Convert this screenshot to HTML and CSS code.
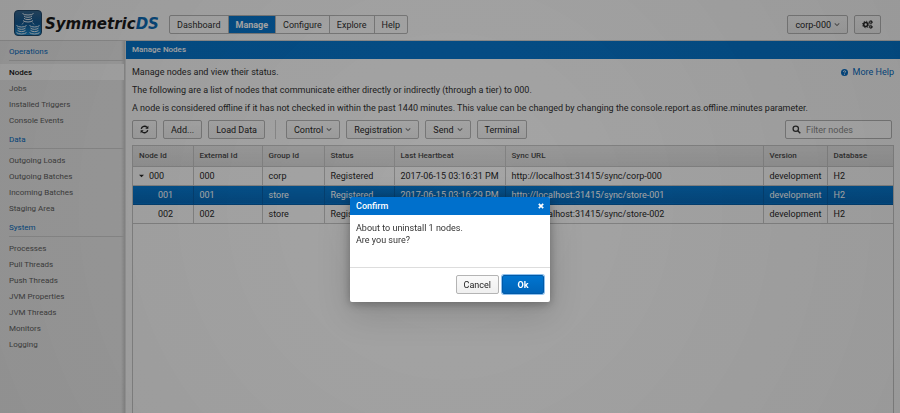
FILE: index.html
```html
<!DOCTYPE html>
<html lang="en">
<head>
<meta charset="utf-8">
<title>SymmetricDS - Manage Nodes</title>
<link rel="stylesheet" href="styles.css">
</head>
<body>
<div class="app">
  <header class="topbar">
    <div class="brand">
      <svg class="brand-mark" viewBox="0 0 28 26" aria-hidden="true">
        <defs><linearGradient id="mark" x1="0" y1="0" x2="0" y2="1"><stop offset="0" stop-color="#35668f"/><stop offset=".5" stop-color="#0d5590"/><stop offset="1" stop-color="#1689cf"/></linearGradient></defs>
        <rect x=".5" y=".5" width="27" height="25" rx="3.5" fill="url(#mark)" stroke="#1d4468"/>
        <path d="M9.500 12.500L8 14.500M18.500 12.500l1.500 2" stroke="#a9c8df" stroke-width="1"/>
        <g fill="none" stroke="#e6f0f8" stroke-width="1">
          <path d="M8.500 3.500Q10 5 14 5T19.500 3.500M10 6Q11 7.300 14 7.300T18 6M10 8.300Q11 9.600 14 9.600T18 8.300M9 10.600Q10.500 12 14 12T19 10.600"/>
          <path d="M2.500 15.500Q4 17 7.500 17T12.500 15.500M3.500 18Q4.500 19.300 7.500 19.300T11.500 18M3.500 20.300Q4.500 21.600 7.500 21.600T11.500 20.300M2.500 22.600Q4 24 7.500 24T12.500 22.600"/>
          <path d="M15.500 15.500Q17 17 20.500 17T25.500 15.500M16.500 18Q17.500 19.300 20.500 19.300T24.500 18M16.500 20.300Q17.500 21.600 20.500 21.600T24.500 20.300M15.500 22.600Q17 24 20.500 24T25.500 22.600"/>
        </g>
      </svg>
      <span class="brand-name">Symmetric<span class="brand-ds">DS</span></span>
    </div>
    <nav class="tabs" aria-label="Main">
      <button class="tab">Dashboard</button><button class="tab tab-on">Manage</button><button class="tab">Configure</button><button class="tab">Explore</button><button class="tab">Help</button>
    </nav>
    <div class="account">
      <button class="btn">corp-000<svg class="chev" viewBox="0 0 8 6"><path d="M1 1.500l3 3 3-3"/></svg></button>
      <button class="btn btn-gear" aria-label="Settings"><svg class="gears" viewBox="0 0 12 10"><g fill="none" stroke="#222"><circle cx="4" cy="5" r="2.200" stroke-width="1.800"/><circle cx="4" cy="5" r="3.600" stroke-width="1" stroke-dasharray="1.400 1.427"/><circle cx="9.600" cy="2.400" r="1.200" stroke-width="1.200"/><circle cx="9.600" cy="2.400" r="2" stroke-width=".7" stroke-dasharray="1 1.100"/><circle cx="9.600" cy="7.600" r="1.200" stroke-width="1.200"/><circle cx="9.600" cy="7.600" r="2" stroke-width=".7" stroke-dasharray="1 1.100"/></g></svg></button>
    </div>
  </header>
  <div class="body">
    <nav class="sidebar" aria-label="Sections">
      <h2 class="group">Operations</h2>
      <ul class="links">
        <li><a class="link link-on" href="#">Nodes</a></li>
        <li><a class="link" href="#">Jobs</a></li>
        <li><a class="link" href="#">Installed Triggers</a></li>
        <li><a class="link" href="#">Console Events</a></li>
      </ul>
      <h2 class="group">Data</h2>
      <ul class="links">
        <li><a class="link" href="#">Outgoing Loads</a></li>
        <li><a class="link" href="#">Outgoing Batches</a></li>
        <li><a class="link" href="#">Incoming Batches</a></li>
        <li><a class="link" href="#">Staging Area</a></li>
      </ul>
      <h2 class="group">System</h2>
      <ul class="links">
        <li><a class="link" href="#">Processes</a></li>
        <li><a class="link" href="#">Pull Threads</a></li>
        <li><a class="link" href="#">Push Threads</a></li>
        <li><a class="link" href="#">JVM Properties</a></li>
        <li><a class="link" href="#">JVM Threads</a></li>
        <li><a class="link" href="#">Monitors</a></li>
        <li><a class="link" href="#">Logging</a></li>
      </ul>
    </nav>
    <main class="main">
      <h1 class="title">Manage Nodes</h1>
      <div class="content">
        <div class="intro">
          <p>Manage nodes and view their status.</p>
          <a class="help" href="#"><svg class="help-icon" viewBox="0 0 8 8"><circle cx="4" cy="4" r="4" fill="#0068c0"/><path d="M2.700 3.200Q2.800 2 4 2T5.300 3.100Q5.300 3.700 4.600 4T4 4.900M4 5.600v1" fill="none" stroke="#fff" stroke-width="1"/></svg>More Help</a>
        </div>
        <p>The following are a list of nodes that communicate either directly or indirectly (through a tier) to 000.</p>
        <p>A node is considered offline if it has not checked in within the past 1440 minutes. This value can be changed by changing the console.report.as.offline.minutes parameter.</p>
        <div class="toolbar">
          <button class="btn btn-icon" aria-label="Refresh"><svg class="refresh" viewBox="0 0 10 10"><path d="M1.400 4.400A3.700 3.700 0 0 1 7.800 2.600M8.600 5.600A3.700 3.700 0 0 1 2.200 7.400" fill="none" stroke="#222" stroke-width="1.500"/><path d="M9.300.8v3.400H5.900zM.7 9.200V5.800h3.400z" fill="#222"/></svg></button>
          <button class="btn">Add...</button>
          <button class="btn">Load Data</button>
          <span class="rule"></span>
          <button class="btn">Control<svg class="chev" viewBox="0 0 8 6"><path d="M1 1.500l3 3 3-3"/></svg></button>
          <button class="btn">Registration<svg class="chev" viewBox="0 0 8 6"><path d="M1 1.500l3 3 3-3"/></svg></button>
          <button class="btn">Send<svg class="chev" viewBox="0 0 8 6"><path d="M1 1.500l3 3 3-3"/></svg></button>
          <button class="btn">Terminal</button>
          <label class="filter"><svg class="search" viewBox="0 0 10 10"><circle cx="4.200" cy="4.200" r="3" fill="none" stroke="#333" stroke-width="1.400"/><path d="M6.400 6.400l2.800 2.800" stroke="#333" stroke-width="1.600"/></svg><input type="text" placeholder="Filter nodes" aria-label="Filter nodes"></label>
        </div>
        <div class="grid">
          <table>
            <colgroup><col class="c-node"><col class="c-ext"><col class="c-group"><col class="c-status"><col class="c-beat"><col><col class="c-version"><col class="c-db"></colgroup>
            <thead><tr><th>Node Id</th><th>External Id</th><th>Group Id</th><th>Status</th><th>Last Heartbeat</th><th>Sync URL</th><th>Version</th><th>Database</th></tr></thead>
            <tbody>
              <tr><td class="root"><svg class="caret" viewBox="0 0 6 4"><path d="M0 .5h6L3 3.500z"/></svg>000</td><td>000</td><td>corp</td><td>Registered</td><td>2017-06-15 03:16:31 PM</td><td>http://localhost:31415/sync/corp-000</td><td>development</td><td>H2</td></tr>
              <tr class="picked"><td class="child">001</td><td>001</td><td>store</td><td>Registered</td><td>2017-06-15 03:16:29 PM</td><td>http://localhost:31415/sync/store-001</td><td>development</td><td>H2</td></tr>
              <tr><td class="child">002</td><td>002</td><td>store</td><td>Registered</td><td>2017-06-15 03:16:29 PM</td><td>http://localhost:31415/sync/store-002</td><td>development</td><td>H2</td></tr>
            </tbody>
          </table>
        </div>
      </div>
    </main>
  </div>
</div>
<div class="curtain">
  <section class="dialog" role="dialog" aria-modal="true" aria-labelledby="dlg-title">
    <header class="dialog-head"><h2 id="dlg-title">Confirm</h2><button class="close" aria-label="Close"><svg viewBox="0 0 6 6"><path d="M.8.8l4.400 4.400M5.200.8L.8 5.200"/></svg></button></header>
    <p class="dialog-text">About to uninstall 1 nodes.<br>Are you sure?</p>
    <footer class="dialog-foot"><button class="btn">Cancel</button><button class="btn btn-ok">Ok</button></footer>
  </section>
</div>
</body>
</html>
```
FILE: styles.css
```css
* { box-sizing: border-box; }
body { margin: 0; font: 9px/12px Roboto, "Liberation Sans", sans-serif; color: #2a2a2a; background: #fafafa; }
h1, h2, p, ul { margin: 0; padding: 0; }
ul { list-style: none; }
a { text-decoration: none; color: inherit; }
button, input { font: inherit; color: inherit; }
svg { display: block; flex: none; }

.app { min-height: 100vh; display: flex; flex-direction: column; }
.topbar { height: 41px; flex: none; display: flex; align-items: flex-start; padding: 7px 19px 0 14px; border-bottom: 1px solid #d0d0d0; }
.brand { display: flex; align-items: center; width: 155px; margin-top: 3px; gap: 3px; }
.brand-mark { width: 28px; height: 26px; }
.brand-name { padding-top: 2px; font: italic bold 15px/18px "DejaVu Sans", sans-serif; color: #151515; }
.brand-ds { color: #0768b4; }
.tabs { display: flex; margin-top: 8px; border: 1px solid #b4b4b4; border-radius: 2px; background: #fafafa; }
.tab { height: 17px; padding: 0 7px; border: 0; border-right: 1px solid #b4b4b4; background: none; }
.tab:last-child { border-right: 0; }
.tab-on { background: #0072ca; color: #fff; font-weight: 700; }
.account { margin: 8px 0 0 auto; display: flex; gap: 6px; }

.btn { height: 19px; padding: 0 7px; border: 1px solid #b4b4b4; border-radius: 2px; background: linear-gradient(#fafafa, #efefef); color: #222; display: flex; align-items: center; justify-content: center; gap: 3px; white-space: nowrap; }
.chev { width: 6px; height: 5px; fill: none; stroke: #777; stroke-width: 1.400; }
.btn-gear { width: 27px; padding: 0; }
.gears { width: 11px; height: 9px; }
.btn-icon { width: 25px; padding: 0; }
.refresh { width: 9px; height: 9px; }

.body { flex: 1; display: flex; }
.sidebar { width: 126px; flex: none; padding-top: 2px; background: linear-gradient(90deg, #ebebeb 0, #ebebeb 121px, #c8c8c8 125px, #fafafa 126px); font-size: 8px; color: #5c5c5c; }
.group { margin: 0 2px 0 9px; height: 18px; line-height: 17px; font-size: 8px; font-weight: 400; color: #0068c0; border-bottom: 1px solid #cfcfcf; }
.links { padding: 3px 2px 3px 0; }
.link { display: block; padding-left: 9px; height: 16px; line-height: 18px; }
.link-on { background: #fafafa; color: #111; font-weight: 500; }

.main { flex: 1; min-width: 0; display: flex; flex-direction: column; }
.title { height: 18px; padding-left: 6px; font-size: 8px; line-height: 18px; font-weight: 500; color: #fff; background: #0072ca; }
.content { flex: 1; display: flex; flex-direction: column; gap: 6px; padding: 7px 6px 0; }
.intro { display: flex; justify-content: space-between; }
.help { display: flex; align-items: center; gap: 5px; color: #0068c0; }
.help-icon { width: 7px; height: 7px; }
.toolbar { display: flex; gap: 6px; }
.rule { width: 1px; margin: 0 4px; background: #ccc; }
.filter { margin: 0 2px 0 auto; width: 107px; height: 19px; padding: 0 6px; display: flex; align-items: center; gap: 5px; border: 1px solid #b4b4b4; border-radius: 2px; background: #fff; }
.filter input { width: 100%; min-width: 0; padding: 0; border: 0; background: none; outline: 0; }
.filter input::placeholder { color: #888; opacity: 1; }
.search { width: 9px; height: 9px; }

.grid { flex: 1; border: 1px solid #c4c4c4; border-bottom: 0; }
table { width: 100%; border-collapse: collapse; table-layout: fixed; }
th, td { padding: 0 0 0 6px; border-right: 1px solid #c4c4c4; text-align: left; white-space: nowrap; }
th:last-child, td:last-child { border-right: 0; }
th { height: 20px; font-size: 8px; font-weight: 500; color: #444; background: linear-gradient(#e8e8e8, #dcdcdc); border-bottom: 1px solid #c4c4c4; }
td { height: 19px; color: #222; border-bottom: 1px solid #c4c4c4; }
.picked td { color: #fff; background: linear-gradient(#0078d2, #0066b8); border-color: #005ba6; }
.c-node { width: 60px; }
.c-ext { width: 69px; }
.c-group { width: 62px; }
.c-status { width: 70px; }
.c-beat { width: 111px; }
.c-version { width: 64px; }
.c-db { width: 66px; }
.caret { display: inline-block; width: 5px; height: 4px; margin-right: 5px; vertical-align: middle; fill: #222; }
td.child { padding-left: 25px; }

.curtain { position: fixed; inset: 0; display: flex; justify-content: center; align-items: flex-start; padding-top: 197px; background: radial-gradient(circle, rgba(16, 16, 16, .36), rgba(8, 8, 8, .4)); }
.dialog { width: 200px; background: #fff; border-radius: 2px; box-shadow: 0 2px 10px rgba(0, 0, 0, .3), 0 12px 34px rgba(0, 0, 0, .15); overflow: hidden; }
.dialog-head { height: 18px; padding: 0 6px; display: flex; align-items: center; justify-content: space-between; background: #0070cc; color: #fff; }
.dialog-head h2 { font-size: 9px; font-weight: 500; }
.close { padding: 0; border: 0; background: none; }
.close svg { width: 6px; height: 6px; fill: none; stroke: #fff; stroke-width: 1.700; }
.dialog-text { min-height: 52px; padding: 7px 6px; color: #333; }
.dialog-foot { display: flex; justify-content: flex-end; gap: 3px; padding: 7px 6px 8px; border-top: 1px solid #ddd; }
.btn-ok { min-width: 42px; color: #fff; font-weight: 700; background: linear-gradient(#0075d0, #0064b8); border-color: #005aa8; box-shadow: 0 0 0 1px #8fc0ec; }
```
